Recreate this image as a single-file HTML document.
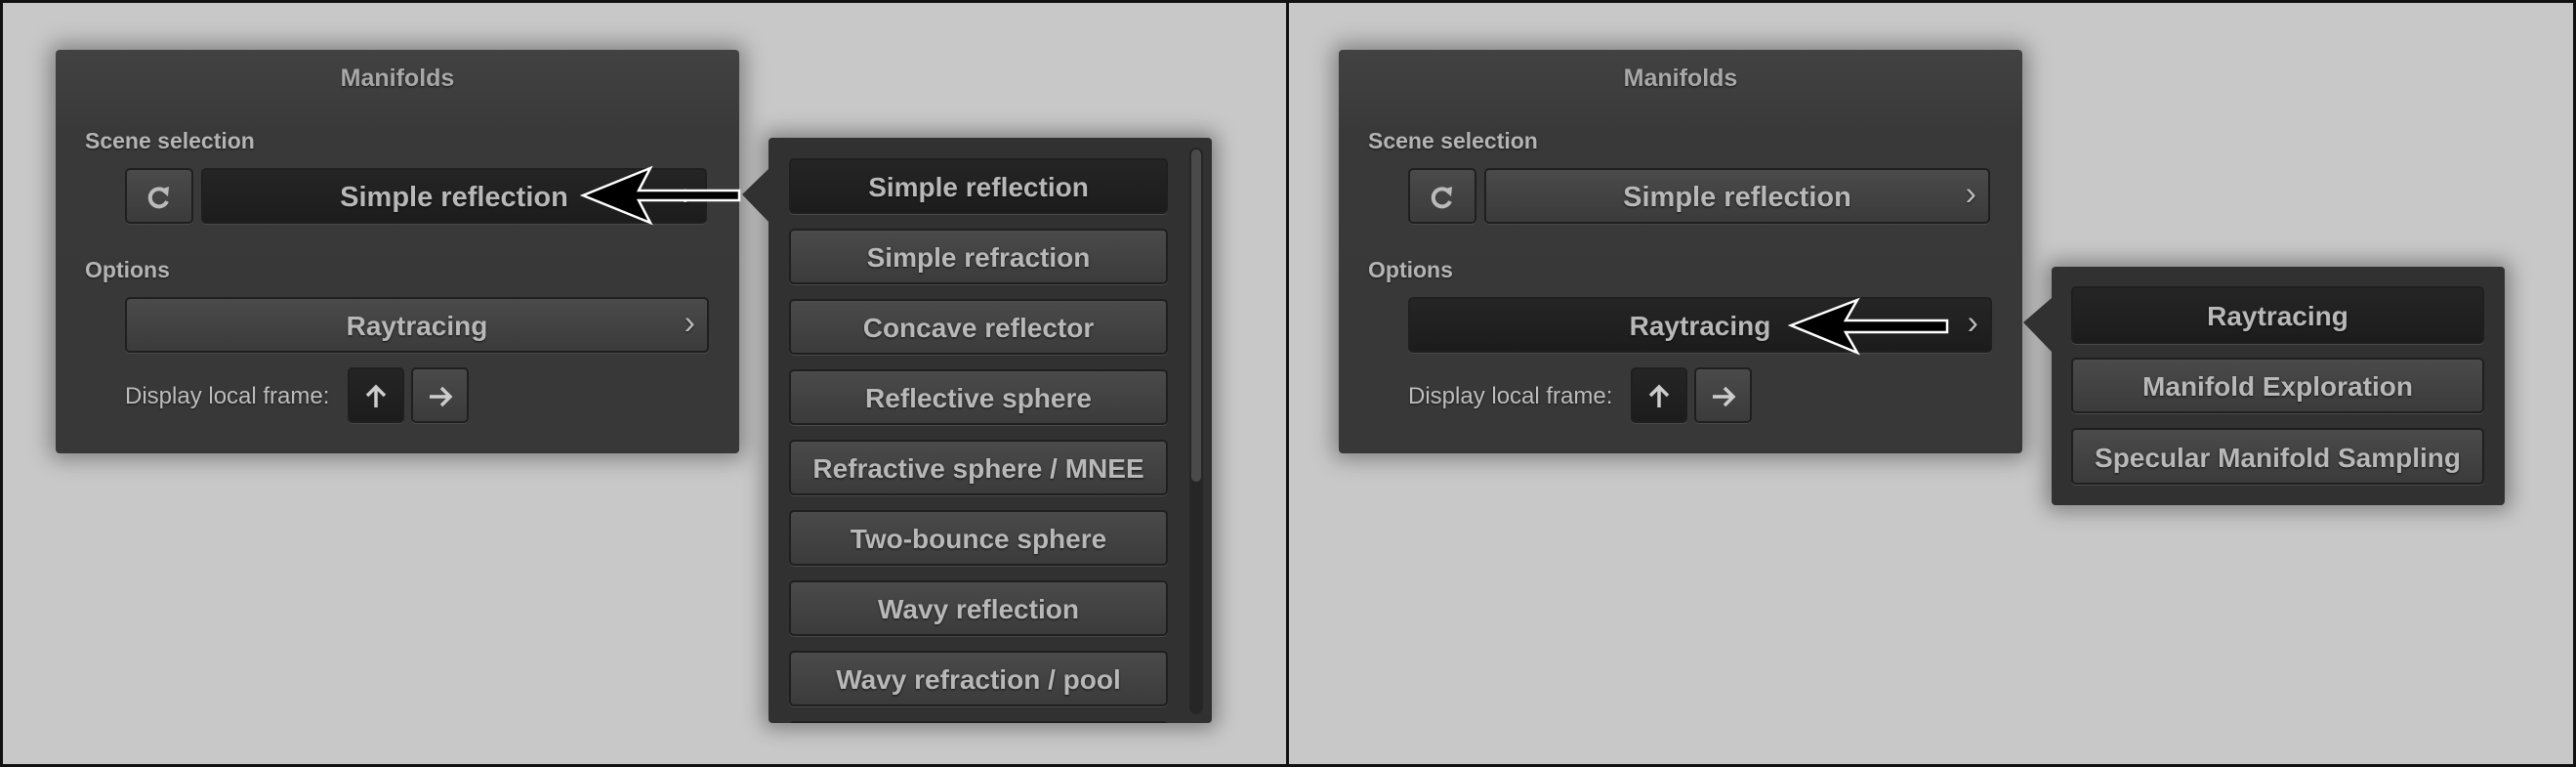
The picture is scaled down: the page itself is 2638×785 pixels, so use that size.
<!DOCTYPE html>
<html><head><meta charset="utf-8"><style>
*{margin:0;padding:0;box-sizing:border-box}
body{width:2638px;height:785px;background:#c8c8c8;position:relative;overflow:hidden;font-family:"Liberation Sans",sans-serif}
.frame{position:absolute;border:3px solid #111}
.half{position:absolute;top:0;left:0;width:1319px;height:785px}
.panel{position:absolute;left:57px;top:51px;width:700px;height:413px;background:linear-gradient(#424242,#393939 20%,#383838);border-radius:4px;box-shadow:0 0 22px 6px rgba(0,0,0,.35)}
.t{position:absolute;color:#b4b4b4;white-space:nowrap;line-height:1;text-shadow:0 1px 2px rgba(0,0,0,.6)}
.btn{position:absolute;border:2px solid #1f1f1f;border-radius:5px;background:linear-gradient(#4a4a4a,#3b3b3b);box-shadow:0 1px 0 #4a4a4a;display:flex;align-items:center;justify-content:center;color:#b8b8b8;font-weight:bold;font-size:28px;text-shadow:0 1px 2px rgba(0,0,0,.7);padding-top:3px}
.btn.on{background:linear-gradient(#252525,#1c1c1c)}
.chev{position:absolute;right:12px;top:50%;transform:translateY(-55%);font-size:34px;font-weight:normal;color:#bbb}
.pop{position:absolute;background:#313131;border-radius:4px;box-shadow:0 0 20px 6px rgba(0,0,0,.35)}
.tri{position:absolute}
</style></head><body>
<div class="frame" style="left:0;top:0;width:2638px;height:785px"></div>
<div style="position:absolute;left:1317px;top:0;width:3px;height:785px;background:#111"></div>

<!-- LEFT -->
<div class="half">
 <div class="panel">
  <div class="t" style="left:0;width:700px;text-align:center;top:17px;font-size:25px;font-weight:bold;color:#a8a8a8">Manifolds</div>
  <div class="t" style="left:30px;top:82px;font-size:23px;font-weight:bold">Scene selection</div>
  <div class="t" style="left:30px;top:214px;font-size:23px;font-weight:bold">Options</div>
  <div class="t" style="left:71px;top:343px;font-size:24px;color:#bdbdbd">Display local frame:</div>
 </div>
 <div class="btn" style="left:128px;top:172px;width:70px;height:57px"><svg width="28" height="28" viewBox="0 0 28 28"><path d="M21 9 A9 9 0 1 0 22 18" fill="none" stroke="#bbb" stroke-width="4"/><path d="M15 6 L24 3 L23 13 Z" fill="#bbb"/></svg></div>
 <div class="btn on" style="left:206px;top:172px;width:518px;height:57px;font-size:29px">Simple reflection<span class="chev">›</span></div>
 <div class="btn" style="left:128px;top:304px;width:598px;height:57px">Raytracing<span class="chev">›</span></div>
 <div class="btn on" style="left:356px;top:376px;width:58px;height:57px"><svg width="26" height="28" viewBox="0 0 26 28"><path d="M13 25V5M4 13L13 4L22 13" fill="none" stroke="#ccc" stroke-width="3.5"/></svg></div>
 <div class="btn" style="left:421px;top:376px;width:59px;height:57px"><svg width="28" height="26" viewBox="0 0 28 26"><path d="M3 13H23M15 4L24 13L15 22" fill="none" stroke="#ccc" stroke-width="3.5"/></svg></div>
 <div class="pop" style="left:787px;top:141px;width:454px;height:599px;overflow:hidden">
  <div style="position:absolute;left:431px;top:10px;width:14px;height:580px;background:#262626;border-radius:7px"></div>
  <div style="position:absolute;left:433px;top:12px;width:10px;height:340px;background:#4a4a4a;border-radius:5px"></div>
  <div class="btn on" style="left:21px;top:21px;width:388px;height:57px">Simple reflection</div>
  <div class="btn" style="left:21px;top:93px;width:388px;height:57px">Simple refraction</div>
  <div class="btn" style="left:21px;top:165px;width:388px;height:57px">Concave reflector</div>
  <div class="btn" style="left:21px;top:237px;width:388px;height:57px">Reflective sphere</div>
  <div class="btn" style="left:21px;top:309px;width:388px;height:57px">Refractive sphere / MNEE</div>
  <div class="btn" style="left:21px;top:381px;width:388px;height:57px">Two-bounce sphere</div>
  <div class="btn" style="left:21px;top:453px;width:388px;height:57px">Wavy reflection</div>
  <div class="btn" style="left:21px;top:525px;width:388px;height:57px">Wavy refraction / pool</div>
  <div class="btn" style="left:21px;top:597px;width:388px;height:57px"></div>
 </div>
 <svg class="tri" style="left:758px;top:170px" width="32" height="60"><path d="M30 2 L2 29 L30 58 Z" fill="#313131"/></svg>
 <svg style="position:absolute;left:0;top:0" width="800" height="300"><path d="M597 200 L666 172 L654 195 L757 195 L757 205 L654 205 L666 228 Z" fill="#000" stroke="#fff" stroke-width="2.5"/></svg>
</div>

<!-- RIGHT -->
<div class="half" style="left:1314px">
 <div class="panel">
  <div class="t" style="left:0;width:700px;text-align:center;top:17px;font-size:25px;font-weight:bold;color:#a8a8a8">Manifolds</div>
  <div class="t" style="left:30px;top:82px;font-size:23px;font-weight:bold">Scene selection</div>
  <div class="t" style="left:30px;top:214px;font-size:23px;font-weight:bold">Options</div>
  <div class="t" style="left:71px;top:343px;font-size:24px;color:#bdbdbd">Display local frame:</div>
 </div>
 <div class="btn" style="left:128px;top:172px;width:70px;height:57px"><svg width="28" height="28" viewBox="0 0 28 28"><path d="M21 9 A9 9 0 1 0 22 18" fill="none" stroke="#bbb" stroke-width="4"/><path d="M15 6 L24 3 L23 13 Z" fill="#bbb"/></svg></div>
 <div class="btn" style="left:206px;top:172px;width:518px;height:57px;font-size:29px">Simple reflection<span class="chev">›</span></div>
 <div class="btn on" style="left:128px;top:304px;width:598px;height:57px">Raytracing<span class="chev">›</span></div>
 <div class="btn on" style="left:356px;top:376px;width:58px;height:57px"><svg width="26" height="28" viewBox="0 0 26 28"><path d="M13 25V5M4 13L13 4L22 13" fill="none" stroke="#ccc" stroke-width="3.5"/></svg></div>
 <div class="btn" style="left:421px;top:376px;width:59px;height:57px"><svg width="28" height="26" viewBox="0 0 28 26"><path d="M3 13H23M15 4L24 13L15 22" fill="none" stroke="#ccc" stroke-width="3.5"/></svg></div>
 <div class="pop" style="left:787px;top:273px;width:464px;height:244px">
  <div class="btn on" style="left:20px;top:20px;width:423px;height:59px">Raytracing</div>
  <div class="btn" style="left:20px;top:93px;width:423px;height:57px">Manifold Exploration</div>
  <div class="btn" style="left:20px;top:165px;width:423px;height:58px">Specular Manifold Sampling</div>
 </div>
 <svg class="tri" style="left:756px;top:303px" width="33" height="60"><path d="M31 2 L2 27 L31 57 Z" fill="#313131"/></svg>
 <svg style="position:absolute;left:0;top:0" width="800" height="400"><path d="M520 333 L588 307 L576 328 L680 328 L680 340 L576 340 L588 361 Z" fill="#000" stroke="#fff" stroke-width="2.5"/></svg>
</div>
</body></html>
